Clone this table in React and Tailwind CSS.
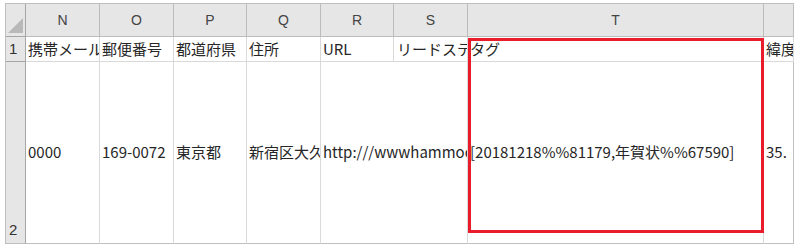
import React from "react";

const cols = [
  { key: "corner", width: "w-[20px]" },
  { key: "N", width: "w-[74px]" },
  { key: "O", width: "w-[74px]" },
  { key: "P", width: "w-[73px]" },
  { key: "Q", width: "w-[74px]" },
  { key: "R", width: "w-[73px]" },
  { key: "S", width: "w-[74px]" },
  { key: "T", width: "w-[296px]" },
  { key: "", width: "w-[30px]" },
];

const jp = "font-['Noto_Sans_CJK_JP','Noto_Sans',sans-serif]";
const cell = `relative flex items-center overflow-hidden whitespace-nowrap border-r border-b border-[#d9d9d9] bg-white pl-[2px] text-[15px] text-[#262626] ${jp}`;

export default function App() {
  return (
    <div className="h-[251px] w-[795px] overflow-hidden bg-white pl-[5px] pt-[3px]">
      <div className="relative w-[789px] border-l border-t border-[#bfbfbf]">
        {/* column letters */}
        <div className="flex h-[33px]">
          {cols.map((c, i) =>
            i === 0 ? (
              <div
                key="corner"
                className={`${c.width} relative shrink-0 border-r border-b border-[#a6a6a6] bg-[#e6e6e6]`}
              >
                <svg className="absolute left-[2px] top-[14px]" width="15" height="15" viewBox="0 0 15 15">
                  <polygon points="15,0 15,15 0,15" fill="#b9b9b9" />
                </svg>
              </div>
            ) : (
              <div
                key={c.key || "next"}
                className={`${c.width} flex shrink-0 items-center justify-center border-r border-b border-[#bcbcbc] bg-[#e6e6e6] font-['Liberation_Sans',Arial,sans-serif] text-[14px] text-[#444]`}
              >
                {c.key}
              </div>
            )
          )}
        </div>

        {/* row 1: field names */}
        <div className="flex h-[25px]">
          <div className="flex w-[20px] shrink-0 items-center border-r border-b border-[#a6a6a6] bg-[#e6e6e6] pl-[3px] font-['Liberation_Sans',Arial,sans-serif] text-[15px] text-[#333]">
            1
          </div>
          <div className={`${cell} w-[74px] shrink-0`}>携帯メールアドレス</div>
          <div className={`${cell} w-[74px] shrink-0`}>郵便番号</div>
          <div className={`${cell} w-[73px] shrink-0`}>都道府県</div>
          <div className={`${cell} w-[74px] shrink-0`}>住所</div>
          <div className={`${cell} w-[73px] shrink-0`}>URL</div>
          <div className={`${cell} w-[74px] shrink-0 pl-[3px]`}>リードステータス</div>
          <div className={`${cell} w-[296px] shrink-0`}>タグ</div>
          <div className={`${cell} w-[30px] shrink-0 border-[#bfbfbf]`}>緯度</div>
        </div>

        {/* row 2: record */}
        <div className="flex h-[182px]">
          <div className="flex w-[20px] shrink-0 items-end border-r border-b border-[#a6a6a6] border-b-[#bfbfbf] bg-[#e6e6e6] pb-[2px] pl-[3px] font-['Liberation_Sans',Arial,sans-serif] text-[15px] text-[#333]">
            2
          </div>
          <div className={`${cell} w-[74px] shrink-0 border-b-[#bfbfbf]`}>0000</div>
          <div className={`${cell} w-[74px] shrink-0 border-b-[#bfbfbf]`}>169-0072</div>
          <div className={`${cell} w-[73px] shrink-0 border-b-[#bfbfbf]`}>東京都</div>
          <div className={`${cell} w-[74px] shrink-0 border-b-[#bfbfbf]`}>新宿区大久保</div>
          <div className={`${cell} w-[147px] shrink-0 border-b-[#bfbfbf]`}>http:///wwwhammock.jp</div>
          <div className={`${cell} w-[296px] shrink-0 border-b-[#bfbfbf] text-[14.6px]`}>
            [20181218%%81179,年賀状%%67590]
          </div>
          <div className={`${cell} w-[30px] shrink-0 border-b-[#bfbfbf] border-r-[#bfbfbf] pl-[1px]`}>35.</div>
        </div>

        {/* highlight around the tag column */}
        <div className="pointer-events-none absolute left-[462px] top-[34px] h-[195px] w-[296px] border-[3px] border-[#e81c2a]" />
      </div>
    </div>
  );
}
